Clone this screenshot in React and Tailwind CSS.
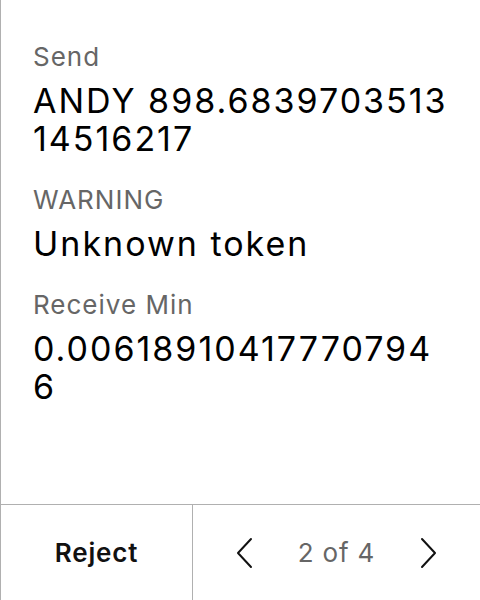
import React from "react";

function Chevron({ dir }) {
  return (
    <svg width="20" height="32" viewBox="0 0 20 32" fill="none" stroke="#111" strokeWidth="2" strokeLinecap="round" strokeLinejoin="round">
      {dir === "left" ? <path d="M16 2 L3 16 L16 30" /> : <path d="M4 2 L17 16 L4 30" />}
    </svg>
  );
}

function Field({ label, value }) {
  return (
    <div className="flex flex-col">
      <div className="text-[26px] leading-[32px] tracking-[1px] text-[#666]">{label}</div>
      <div className="mt-[9px] text-[34px] leading-[38px] tracking-[2px] text-black break-all">{value}</div>
    </div>
  );
}

export default function App() {
  return (
    <div className="w-[480px] h-[600px] bg-white flex flex-col border-l border-[#b0b0b0]" style={{ fontFamily: "Inter, 'Noto Sans', sans-serif" }}>
      <div className="flex-1 flex flex-col gap-[26px] pl-[32px] pr-[32px] pt-[41px]">
        <Field label="Send" value="ANDY 898.683970351314516217" />
        <Field label="WARNING" value="Unknown token" />
        <Field label="Receive Min" value="0.006189104177707946" />
      </div>
      <div className="h-[96px] flex border-t border-[#b0b0b0]">
        <div className="w-[192px] flex items-center justify-center border-r border-[#b0b0b0] text-[26px] tracking-[0.8px] font-semibold text-[#111]">
          Reject
        </div>
        <div className="flex-1 flex items-center justify-between px-[42px]">
          <Chevron dir="left" />
          <span className="text-[26px] tracking-[0.8px] text-[#666]">2 of 4</span>
          <Chevron dir="right" />
        </div>
      </div>
    </div>
  );
}
